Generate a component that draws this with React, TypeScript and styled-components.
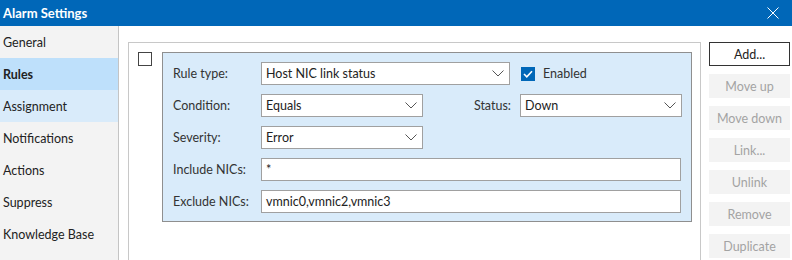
import styled, { createGlobalStyle } from 'styled-components';

const GlobalStyle = createGlobalStyle`
  html, body {
    margin: 0;
    padding: 0;
    background: #ffffff;
  }
  body {
    font-family: Lato, "Noto Sans", "Liberation Sans", sans-serif;
    font-size: 12.5px;
    color: #2b2b2b;
  }
`;

const Window = styled.div`
  width: 792px;
  height: 260px;
  display: flex;
  flex-direction: column;
  overflow: hidden;
  background: #ffffff;
`;

const TitleBar = styled.div`
  height: 26px;
  flex: none;
  background: #0067b8;
  color: #ffffff;
  display: flex;
  align-items: center;
  justify-content: space-between;
  padding: 0 13px 0 3px;
  font-weight: 700;
  font-size: 13px;
`;

const CloseIcon = styled.svg`
  width: 12px;
  height: 12px;
  display: block;
`;

const Body = styled.div`
  flex: 1;
  display: flex;
  min-height: 0;
`;

const Sidebar = styled.nav`
  width: 118px;
  flex: none;
  background: #f3f3f3;
  border-right: 1px solid #c4c4c4;
  display: flex;
  flex-direction: column;
`;

const NavItem = styled.div<{ $state?: 'selected' | 'hover' }>`
  height: 32px;
  display: flex;
  align-items: center;
  padding-left: 3px;
  color: #222;
  font-weight: ${(p) => (p.$state === 'selected' ? 700 : 400)};
  background: ${(p) =>
    p.$state === 'selected' ? '#bee0fb' : p.$state === 'hover' ? '#d9ebfa' : 'transparent'};
`;

const Main = styled.div`
  flex: 1;
  display: flex;
  gap: 8px;
  padding: 16px 3px 0 9px;
`;

const ListPanel = styled.div`
  width: 573px;
  flex: none;
  box-sizing: border-box;
  border: 1px solid #c8c8c8;
  border-bottom: none;
  display: flex;
  align-items: flex-start;
  gap: 10px;
  padding: 9px 0 0 9px;
`;

const RowCheck = styled.div`
  width: 12px;
  height: 12px;
  border: 1px solid #444;
  background: #fff;
  flex: none;
`;

const RuleBox = styled.div`
  width: 530px;
  box-sizing: border-box;
  flex: none;
  background: #d9ebfa;
  border: 1px solid #8f8f8f;
  padding: 9px 9px 8px 10px;
  display: flex;
  flex-direction: column;
  gap: 9px;
`;

const Row = styled.div`
  display: flex;
  align-items: center;
  height: 23px;
`;

const Label = styled.span<{ $align?: 'right' }>`
  width: ${(p) => (p.$align === 'right' ? 'auto' : '88px')};
  flex: ${(p) => (p.$align === 'right' ? 1 : 'none')};
  text-align: ${(p) => p.$align ?? 'left'};
  padding-right: ${(p) => (p.$align === 'right' ? '9px' : '0')};
  color: #333;
`;

const Field = styled.div<{ $width: number }>`
  width: ${(p) => p.$width}px;
  height: 23px;
  box-sizing: border-box;
  background: #fff;
  border: 1px solid #a0a0a0;
  display: flex;
  align-items: center;
  justify-content: space-between;
  padding: 0 5px 0 4px;
  color: #222;
  flex: none;
`;

const Chevron = styled.svg`
  width: 12px;
  height: 7px;
  display: block;
`;

const CheckWrap = styled.label`
  display: flex;
  align-items: center;
  gap: 8px;
  margin-left: 11px;
  color: #333;
`;

const CheckBox = styled.span`
  width: 14px;
  height: 14px;
  background: #0067b8;
  display: flex;
  align-items: center;
  justify-content: center;
`;

const Buttons = styled.div`
  width: 81px;
  flex: none;
  display: flex;
  flex-direction: column;
  gap: 8px;
`;

const Button = styled.button<{ $primary?: boolean }>`
  height: 24px;
  box-sizing: border-box;
  font-family: inherit;
  font-size: 12.5px;
  padding: 0;
  border: 1px solid ${(p) => (p.$primary ? '#333' : '#f3f3f3')};
  background: ${(p) => (p.$primary ? '#fff' : '#f3f3f3')};
  color: ${(p) => (p.$primary ? '#222' : '#a3a3a3')};
`;

function Select({ width, value }: { width: number; value: string }) {
  return (
    <Field $width={width}>
      <span>{value}</span>
      <Chevron viewBox="0 0 12 7">
        <path d="M0.5 0.5 L6 6 L11.5 0.5" fill="none" stroke="#555" strokeWidth="1" />
      </Chevron>
    </Field>
  );
}

const navItems = [
  'General',
  'Rules',
  'Assignment',
  'Notifications',
  'Actions',
  'Suppress',
  'Knowledge Base',
];

const buttons = ['Move up', 'Move down', 'Link...', 'Unlink', 'Remove', 'Duplicate'];

export default function App() {
  return (
    <Window>
      <GlobalStyle />
      <TitleBar>
        <span>Alarm Settings</span>
        <CloseIcon viewBox="0 0 12 12">
          <path d="M0.5 0.5 L11.5 11.5 M11.5 0.5 L0.5 11.5" stroke="#fff" strokeWidth="1" />
        </CloseIcon>
      </TitleBar>
      <Body>
        <Sidebar>
          {navItems.map((item) => (
            <NavItem
              key={item}
              $state={item === 'Rules' ? 'selected' : item === 'Assignment' ? 'hover' : undefined}
            >
              {item}
            </NavItem>
          ))}
        </Sidebar>
        <Main>
          <ListPanel>
            <RowCheck />
            <RuleBox>
              <Row>
                <Label>Rule type:</Label>
                <Select width={249} value="Host NIC link status" />
                <CheckWrap>
                  <CheckBox>
                    <svg width="10" height="8" viewBox="0 0 10 8">
                      <path d="M1 4 L3.8 6.8 L9 1.2" fill="none" stroke="#fff" strokeWidth="1.6" />
                    </svg>
                  </CheckBox>
                  Enabled
                </CheckWrap>
              </Row>
              <Row>
                <Label>Condition:</Label>
                <Select width={162} value="Equals" />
                <Label $align="right">Status:</Label>
                <Select width={162} value="Down" />
              </Row>
              <Row>
                <Label>Severity:</Label>
                <Select width={162} value="Error" />
              </Row>
              <Row>
                <Label>Include NICs:</Label>
                <Field $width={420}>*</Field>
              </Row>
              <Row>
                <Label>Exclude NICs:</Label>
                <Field $width={420}>vmnic0,vmnic2,vmnic3</Field>
              </Row>
            </RuleBox>
          </ListPanel>
          <Buttons>
            <Button $primary>Add...</Button>
            {buttons.map((b) => (
              <Button key={b} disabled>
                {b}
              </Button>
            ))}
          </Buttons>
        </Main>
      </Body>
    </Window>
  );
}
